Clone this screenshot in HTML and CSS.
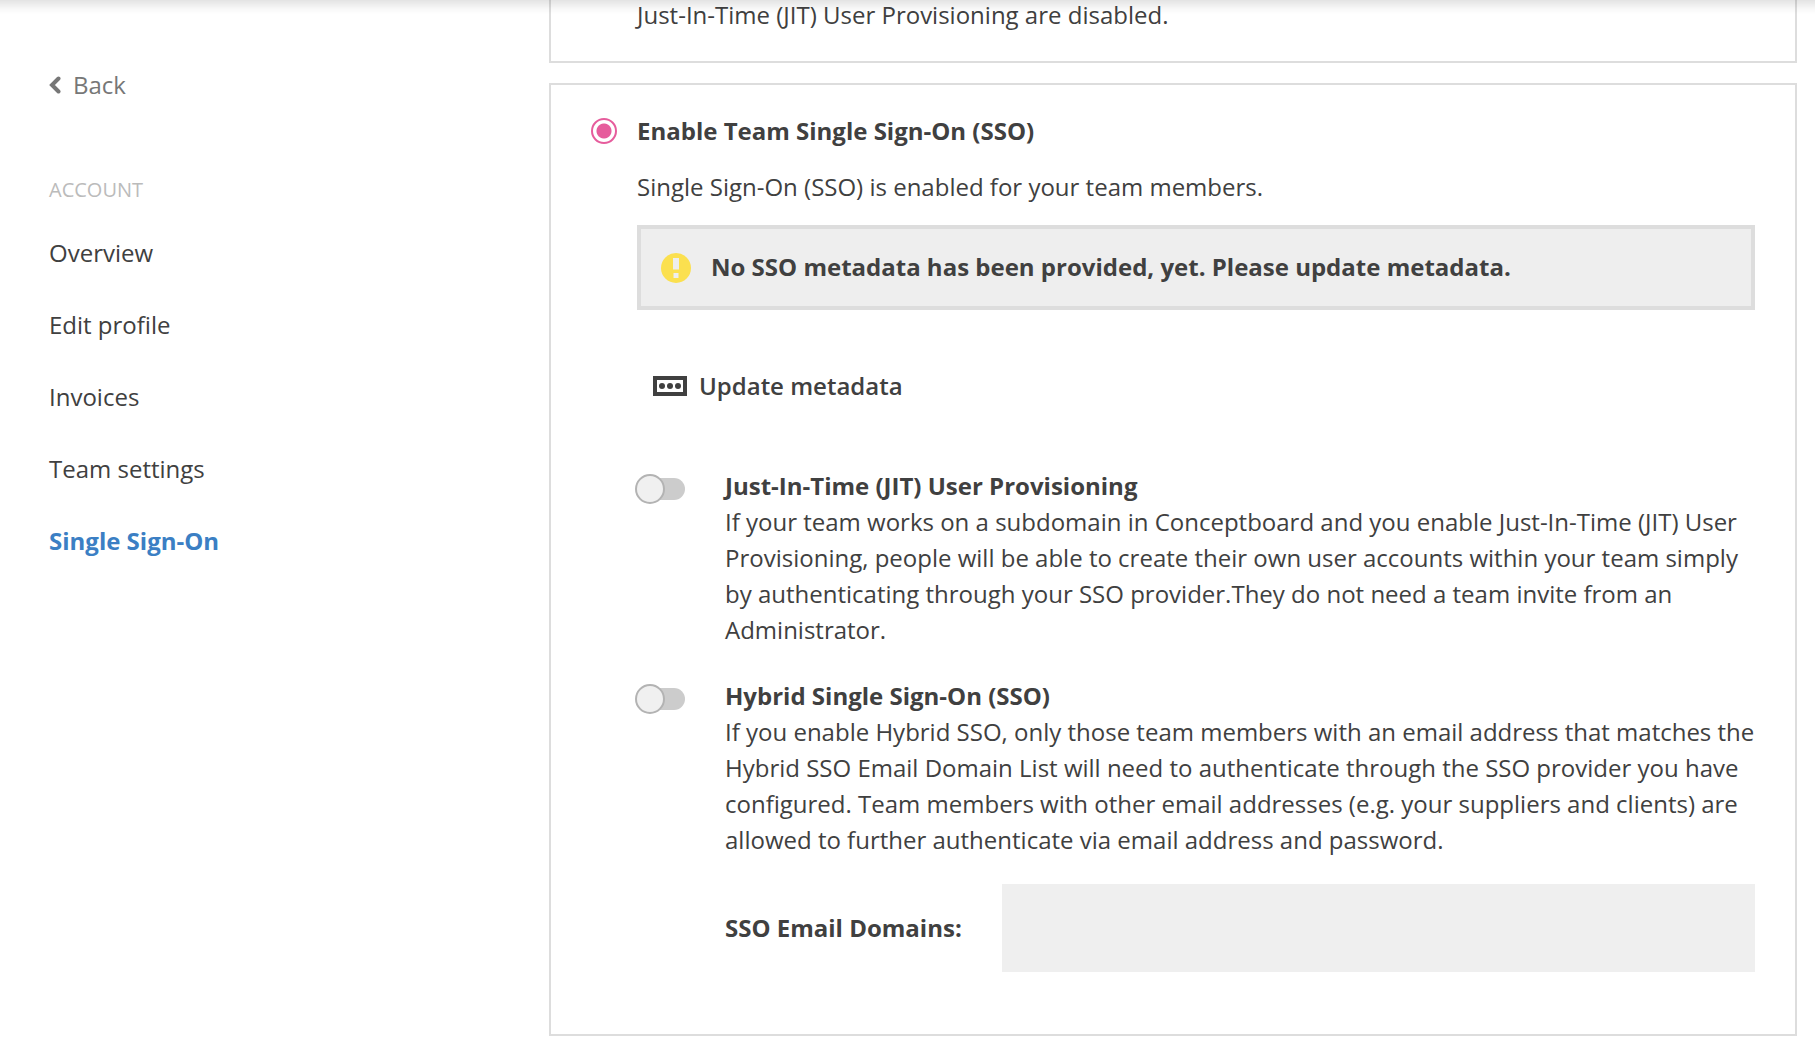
FILE: index.html
```html
<!DOCTYPE html>
<html lang="en">
<head>
<meta charset="utf-8">
<meta name="viewport" content="width=device-width, initial-scale=1">
<title>Single Sign-On</title>
<link rel="stylesheet" href="styles.css">
</head>
<body>
<div class="top-shadow"></div>
<div class="page">
  <aside class="sidebar">
    <a class="back" href="#">
      <svg class="back-icon" viewBox="0 0 12 18" aria-hidden="true"><path d="M9.500 2.500 3 9l6.500 6.500" fill="none" stroke="currentColor" stroke-width="4" stroke-linecap="round"/></svg>
      Back
    </a>
    <h2 class="nav-title">ACCOUNT</h2>
    <nav class="nav">
      <a href="#">Overview</a>
      <a href="#">Edit profile</a>
      <a href="#">Invoices</a>
      <a href="#">Team settings</a>
      <a class="active" href="#" aria-current="page">Single Sign-On</a>
    </nav>
  </aside>

  <main class="content">
    <section class="panel panel-disabled">
      <p>Just-In-Time (JIT) User Provisioning are disabled.</p>
    </section>

    <section class="panel panel-enabled">
      <div class="choice">
        <input class="radio" type="radio" id="enable-sso" name="sso" checked>
        <label class="strong" for="enable-sso">Enable Team Single Sign-On (SSO)</label>
      </div>
      <p class="intro">Single Sign-On (SSO) is enabled for your team members.</p>

      <div class="notice" role="status">
        <svg class="notice-icon" viewBox="0 0 30 30" aria-hidden="true"><circle cx="15" cy="15" r="15" fill="#fbe04f"/><path d="M12 5h6v11.500h-6zM12.500 20h5v5h-5z" fill="#eee"/></svg>
        <span>No SSO metadata has been provided, yet. Please update metadata.</span>
      </div>

      <button class="update" type="button">
        <svg class="update-icon" viewBox="0 0 34 20" aria-hidden="true"><path d="M2 2h30v16H2z" fill="none" stroke="currentColor" stroke-width="4"/><g fill="currentColor"><circle cx="9" cy="10" r="3"/><circle cx="17" cy="10" r="3"/><circle cx="25" cy="10" r="3"/></g></svg>
        Update metadata
      </button>

      <div class="option">
        <input class="toggle" type="checkbox" id="jit">
        <div>
          <label class="strong" for="jit">Just-In-Time (JIT) User Provisioning</label>
          <p>If your team works on a subdomain in Conceptboard and you enable Just-In-Time (JIT) User Provisioning, people will be able to create their own user accounts within your team simply by authenticating through your SSO provider.They do not need a team invite from an Administrator.</p>
        </div>
      </div>

      <div class="option">
        <input class="toggle" type="checkbox" id="hybrid">
        <div>
          <label class="strong" for="hybrid">Hybrid Single Sign-On (SSO)</label>
          <p>If you enable Hybrid SSO, only those team members with an email address that matches the Hybrid SSO Email Domain List will need to authenticate through the SSO provider you have configured. Team members with other email addresses (e.g. your suppliers and clients) are allowed to further authenticate via email address and password.</p>
          <div class="domains">
            <label class="strong" for="domains">SSO Email Domains:</label>
            <input class="domains-input" type="text" id="domains" disabled>
          </div>
        </div>
      </div>
    </section>
  </main>
</div>
</body>
</html>
```
FILE: styles.css
```css
*,
*::before {
  box-sizing: border-box;
}

body {
  margin: 0;
  background: #fff;
  color: #404040;
  font: 24px/36px "Open Sans", "Noto Sans", sans-serif;
}

p,
h2 {
  margin: 0;
}

a {
  color: inherit;
  text-decoration: none;
}

/* Shade cast by the bar above the scrolled page */
.top-shadow {
  position: fixed;
  inset: 0 0 auto;
  height: 14px;
  background: linear-gradient(rgba(0, 0, 0, 0.11), rgba(0, 0, 0, 0.03) 60%, transparent);
  pointer-events: none;
}

.page {
  display: grid;
  grid-template-columns: 500px minmax(0, 1fr);
  padding: 0 18px 19px 49px;
}

.sidebar {
  padding-top: 67px;
}

.back {
  display: inline-flex;
  align-items: center;
  gap: 12px;
  color: #777;
}

.back-icon {
  width: 12px;
  height: 18px;
}

.nav-title {
  margin: 72px 0 30px;
  color: #bbb;
  font-size: 20px;
  font-weight: 400;
  line-height: 30px;
}

.nav {
  display: flex;
  flex-direction: column;
  align-items: flex-start;
  gap: 36px;
}

.active {
  color: #3b7fc4;
  font-weight: 700;
}

.strong {
  font-weight: 700;
}

.panel {
  border: 2px solid #ddd;
  padding: 28px 40px 62px 86px;
}

.panel-disabled {
  margin-bottom: 20px;
  border-top: 0;
  padding-top: 0;
  padding-bottom: 31px;
  line-height: 30px;
}

.choice {
  display: flex;
  align-items: center;
  gap: 20px;
  margin-left: -46px;
}

.radio {
  appearance: none;
  width: 26px;
  height: 26px;
  margin: 0;
  border: 2px solid #e65c9c;
  border-radius: 50%;
  background: radial-gradient(circle, #e65c9c 7px, transparent 8px);
}

.intro {
  margin: 20px 0;
}

.notice {
  display: flex;
  align-items: flex-start;
  gap: 20px;
  border: 4px solid #ddd;
  padding: 20px;
  min-height: 85px;
  background: #eee;
  font-weight: 700;
}

.notice-icon {
  flex: none;
  width: 30px;
  height: 30px;
  margin-top: 4px;
}

.update {
  display: flex;
  align-items: center;
  gap: 12px;
  margin: 58px 0 64px;
  border: 0;
  padding: 0 16px;
  background: none;
  color: inherit;
  font: inherit;
  font-weight: 600;
}

.update-icon {
  width: 34px;
  height: 20px;
}

.option {
  display: grid;
  grid-template-columns: 88px minmax(0, 1fr);
}

.option + .option {
  margin-top: 30px;
}

.toggle {
  appearance: none;
  display: flex;
  align-items: center;
  width: 48px;
  height: 22px;
  margin: 10px 0 0;
  border-radius: 11px;
  background: #ccc;
}

.toggle::before {
  content: "";
  flex: none;
  width: 30px;
  height: 30px;
  margin-left: -2px;
  border: 2px solid #b3b3b3;
  border-radius: 50%;
  background: #f0f0f0;
}

.toggle:checked::before {
  margin-left: 20px;
}

.domains {
  display: flex;
  align-items: center;
  gap: 40px;
  margin-top: 26px;
}

.domains-input {
  flex: 1;
  min-width: 0;
  height: 88px;
  border: 0;
  padding: 0 20px;
  background: #efefef;
  color: inherit;
  font: inherit;
}
```
